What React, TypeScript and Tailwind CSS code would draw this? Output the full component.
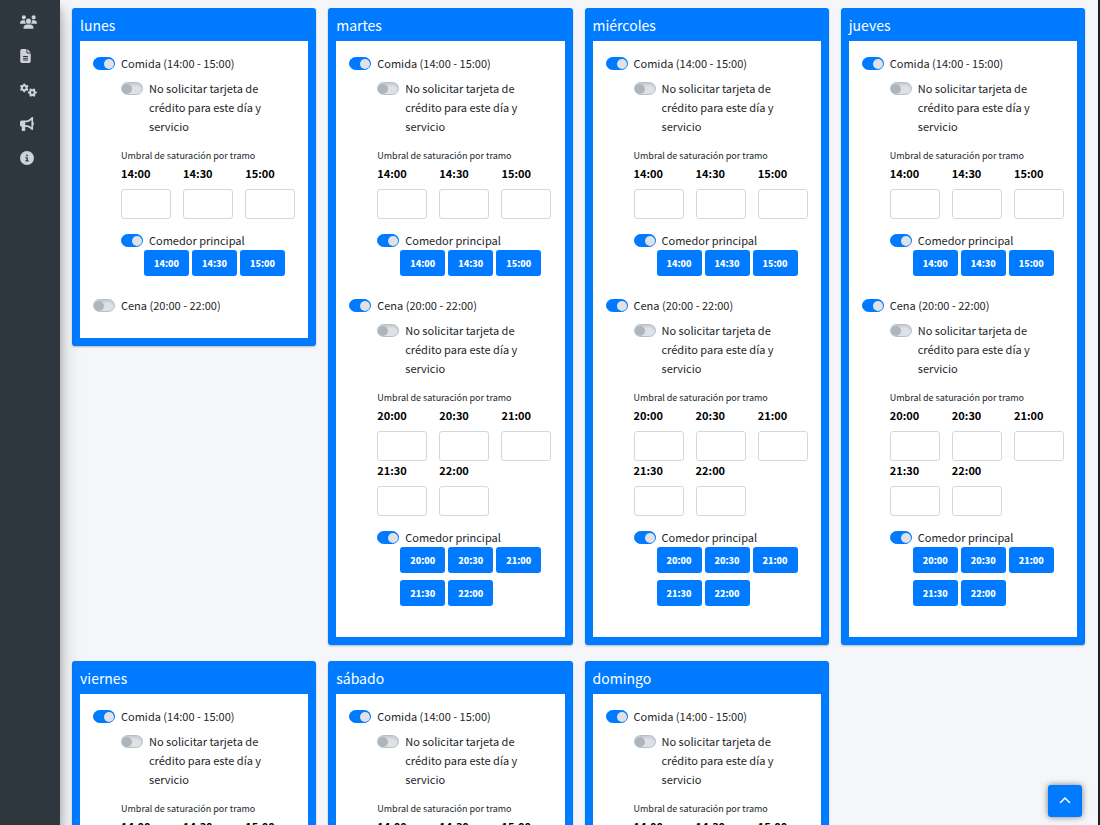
import { useId, useState } from "react";
import { FaUsers, FaFileLines, FaGears, FaBullhorn, FaCircleInfo, FaChevronUp } from "react-icons/fa6";

type Service = { name: string; range: string; slots: string[]; open: boolean };
type Day = { name: string; services: Service[] };

const lunch: Service = { name: "Comida", range: "14:00 - 15:00", slots: ["14:00", "14:30", "15:00"], open: true };
const dinner: Service = {
  name: "Cena",
  range: "20:00 - 22:00",
  slots: ["20:00", "20:30", "21:00", "21:30", "22:00"],
  open: true,
};

const days: Day[] = [
  { name: "lunes", services: [lunch, { ...dinner, open: false }] },
  { name: "martes", services: [lunch, dinner] },
  { name: "miércoles", services: [lunch, dinner] },
  { name: "jueves", services: [lunch, dinner] },
  { name: "viernes", services: [lunch, dinner] },
  { name: "sábado", services: [lunch, dinner] },
  { name: "domingo", services: [lunch, dinner] },
];

const menu = [
  { label: "Clientes", Icon: FaUsers, size: "h-[14px] w-[17px]" },
  { label: "Documentos", Icon: FaFileLines, size: "h-[14px] w-[11px]" },
  { label: "Configuración", Icon: FaGears, size: "h-[14px] w-[17px]" },
  { label: "Promociones", Icon: FaBullhorn, size: "h-[14px] w-[14px]" },
  { label: "Información", Icon: FaCircleInfo, size: "h-[14px] w-[14px]" },
];

function Switch({ label, checked, onChange }: { label: string; checked: boolean; onChange: (v: boolean) => void }) {
  const id = useId();
  return (
    <div className="flex items-start gap-[6px]">
      <input
        id={id}
        type="checkbox"
        role="switch"
        checked={checked}
        onChange={(e) => onChange(e.target.checked)}
        className="mt-[3px] flex h-[13px] w-[22px] shrink-0 appearance-none items-center rounded-full border border-[#b8bfc6] bg-[#dee2e6] shadow-[inset_0_2px_2px_rgba(0,0,0,0.1)] before:block before:size-[10px] before:rounded-full before:bg-[#adb5bd] checked:justify-end checked:border-[#007bff] checked:bg-[#007bff] checked:shadow-none checked:before:bg-[#dee2e6]"
      />
      <label htmlFor={id} className="text-[11px] leading-[19px]">
        {label}
      </label>
    </div>
  );
}

function ThresholdField({ time }: { time: string }) {
  const id = useId();
  return (
    <div className="flex min-w-0 flex-col gap-[7px]">
      <label htmlFor={id} className="text-[11px] leading-[18px] font-bold text-black">
        {time}
      </label>
      <input id={id} type="text" className="h-[30px] w-full rounded-[3px] border border-[#d3d8dd] bg-white px-2 text-[11px]" />
    </div>
  );
}

function ServiceBlock({ service }: { service: Service }) {
  const [open, setOpen] = useState(service.open);
  const [noCard, setNoCard] = useState(false);
  const [room, setRoom] = useState(true);
  return (
    <section className="pb-3">
      <Switch label={`${service.name} (${service.range})`} checked={open} onChange={setOpen} />
      {open && (
        <div className="pb-2 pl-7">
          <div className="mt-[6px]">
            <Switch
              label="No solicitar tarjeta de crédito para este día y servicio"
              checked={noCard}
              onChange={setNoCard}
            />
          </div>
          <p className="mt-3 text-[9px] leading-4">Umbral de saturación por tramo</p>
          <div className="mb-3 grid grid-cols-3 gap-x-3">
            {service.slots.map((t) => (
              <ThresholdField key={t} time={t} />
            ))}
          </div>
          <Switch label="Comedor principal" checked={room} onChange={setRoom} />
          <div className="ml-[23px] flex flex-wrap gap-x-[3px] gap-y-[7px]">
            {service.slots.map((t) => (
              <button
                key={t}
                type="button"
                className="h-[26px] w-[45px] rounded-[3px] bg-[#007bff] text-[9px] leading-[15px] font-black text-white"
              >
                {t}
              </button>
            ))}
          </div>
        </div>
      )}
    </section>
  );
}

function DayCard({ day }: { day: Day }) {
  return (
    <article className="rounded-[3px] bg-[#007bff] px-2 pb-2 shadow-[0_1px_2px_rgba(0,0,0,0.25)]">
      <h2 className="h-[33px] pt-[7px] text-[14px] leading-[20px] text-white">{day.name}</h2>
      <div className="bg-white px-[13px] pt-[13px] pb-[11px]">
        {day.services.map((s) => (
          <ServiceBlock key={s.name} service={s} />
        ))}
      </div>
    </article>
  );
}

export default function App() {
  return (
    <div className="flex h-screen overflow-hidden border-r-2 border-[#1c1f1e] bg-[#f4f6f9] font-['Noto_Sans_CJK_SC','Noto_Sans',sans-serif] text-[#212529]">
      <nav className="z-10 w-[60px] shrink-0 bg-[#2f373e] shadow-[0_11px_22px_rgba(0,0,0,0.25),0_8px_8px_rgba(0,0,0,0.22)]">
        <ul className="flex flex-col pt-[5px]">
          {menu.map(({ label, Icon, size }) => (
            <li key={label}>
              <a href="#" aria-label={label} className="flex h-[34px] items-center pl-5 text-[#cdd1d9]">
                <Icon className={size} />
              </a>
            </li>
          ))}
        </ul>
      </nav>
      <main className="min-w-0 grow overflow-y-auto pt-2 pr-[13px] pl-3 [scrollbar-width:none]">
        <div className="grid grid-cols-4 items-start gap-x-3 gap-y-4">
          {days.map((d) => (
            <DayCard key={d.name} day={d} />
          ))}
        </div>
      </main>
      <a
        href="#"
        aria-label="Volver arriba"
        className="fixed right-[18px] bottom-2 z-20 flex h-8 w-[34px] items-center justify-center rounded-[3px] bg-[#007bff] text-white shadow-[0_0_6px_rgba(0,0,0,0.5)]"
      >
        <FaChevronUp className="size-3" />
      </a>
    </div>
  );
}
